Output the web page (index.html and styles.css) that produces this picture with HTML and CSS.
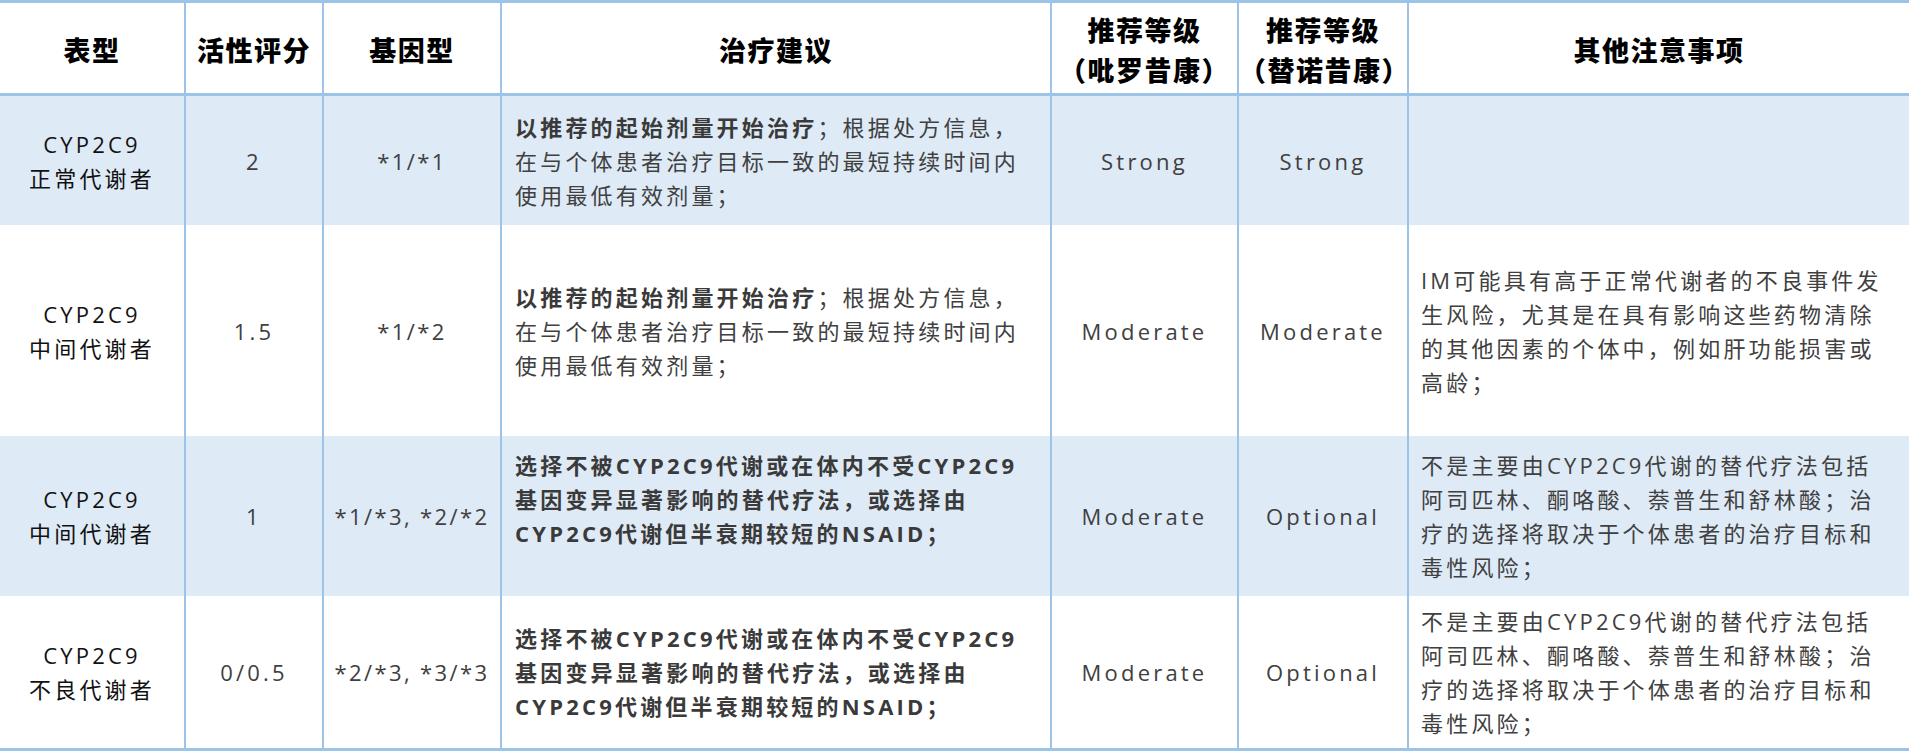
FILE: index.html
```html
<!DOCTYPE html>
<html lang="zh-CN">
<head>
<meta charset="utf-8">
<title>CYP2C9 表型与治疗建议</title>
<link rel="stylesheet" href="styles.css">
</head>
<body>
<table class="grid">
  <colgroup>
    <col class="c-phen">
    <col class="c-score">
    <col class="c-geno">
    <col class="c-treat">
    <col class="c-lvl1">
    <col class="c-lvl2">
    <col class="c-note">
  </colgroup>
  <thead>
    <tr class="head">
      <th>表型</th>
      <th>活性评分</th>
      <th>基因型</th>
      <th>治疗建议</th>
      <th>推荐等级<br>（吡罗昔康）</th>
      <th>推荐等级<br>（替诺昔康）</th>
      <th>其他注意事项</th>
    </tr>
  </thead>
  <tbody>
    <tr class="r1 shade">
      <td class="phen">CYP2C9<br>正常代谢者</td>
      <td class="mid">2</td>
      <td class="mid geno">*1/*1</td>
      <td class="txt"><b>以推荐的起始剂量开始治疗</b>；根据处方信息，<br>在与个体患者治疗目标一致的最短持续时间内<br>使用最低有效剂量；</td>
      <td class="mid">Strong</td>
      <td class="mid">Strong</td>
      <td class="txt note"></td>
    </tr>
    <tr class="r2">
      <td class="phen">CYP2C9<br>中间代谢者</td>
      <td class="mid">1.5</td>
      <td class="mid geno">*1/*2</td>
      <td class="txt"><b>以推荐的起始剂量开始治疗</b>；根据处方信息，<br>在与个体患者治疗目标一致的最短持续时间内<br>使用最低有效剂量；</td>
      <td class="mid">Moderate</td>
      <td class="mid">Moderate</td>
      <td class="txt note">IM可能具有高于正常代谢者的不良事件发<br>生风险，尤其是在具有影响这些药物清除<br>的其他因素的个体中，例如肝功能损害或<br>高龄；</td>
    </tr>
    <tr class="r3 shade">
      <td class="phen">CYP2C9<br>中间代谢者</td>
      <td class="mid">1</td>
      <td class="mid geno">*1/*3, *2/*2</td>
      <td class="txt strong raised">选择不被CYP2C9代谢或在体内不受CYP2C9<br>基因变异显著影响的替代疗法，或选择由<br>CYP2C9代谢但半衰期较短的NSAID；</td>
      <td class="mid">Moderate</td>
      <td class="mid">Optional</td>
      <td class="txt note">不是主要由CYP2C9代谢的替代疗法包括<br>阿司匹林、酮咯酸、萘普生和舒林酸；治<br>疗的选择将取决于个体患者的治疗目标和<br>毒性风险；</td>
    </tr>
    <tr class="r4">
      <td class="phen">CYP2C9<br>不良代谢者</td>
      <td class="mid">0/0.5</td>
      <td class="mid geno">*2/*3, *3/*3</td>
      <td class="txt strong">选择不被CYP2C9代谢或在体内不受CYP2C9<br>基因变异显著影响的替代疗法，或选择由<br>CYP2C9代谢但半衰期较短的NSAID；</td>
      <td class="mid">Moderate</td>
      <td class="mid">Optional</td>
      <td class="txt note">不是主要由CYP2C9代谢的替代疗法包括<br>阿司匹林、酮咯酸、萘普生和舒林酸；治<br>疗的选择将取决于个体患者的治疗目标和<br>毒性风险；</td>
    </tr>
  </tbody>
</table>
</body>
</html>
```

FILE: styles.css
```css
html, body {
  margin: 0;
  padding: 0;
  background: #ffffff;
}

.grid {
  width: 1909px;
  table-layout: fixed;
  border-collapse: separate;
  border-spacing: 0;
  border-top: 3px solid #9dc3e6;
  border-bottom: 3px solid #9dc3e6;
  font-family: "Open Sans", "Noto Sans CJK SC", sans-serif;
  color: #404040;
}

.c-phen { width: 186px; }
.c-score { width: 138px; }
.c-geno { width: 178px; }
.c-treat { width: 550px; }
.c-lvl1 { width: 187px; }
.c-lvl2 { width: 170px; }
.c-note { width: 500px; }

th, td {
  padding: 0;
  border-right: 2px solid #9dc3e6;
  vertical-align: middle;
}

th:last-child, td:last-child {
  border-right: 0;
}

.head { height: 93px; }
.r1 { height: 129px; }
.r2 { height: 211px; }
.r3 { height: 160px; }
.r4 { height: 152px; }

th {
  border-bottom: 3px solid #9dc3e6;
  padding-top: 4px;
  font-family: "Noto Sans CJK SC", sans-serif;
  font-size: 27px;
  font-weight: 900;
  line-height: 40px;
  letter-spacing: 1.5px;
  color: #000000;
  text-align: center;
}

td {
  font-size: 22px;
  line-height: 34px;
  letter-spacing: 3.2px;
}

.shade td {
  background: #deeaf6;
}

.phen {
  text-align: center;
  color: #111111;
}

.mid {
  text-align: center;
}

.geno {
  letter-spacing: 2.4px;
}

.txt {
  text-align: left;
  padding-left: 13px;
  white-space: nowrap;
}

.note {
  padding-left: 12px;
}

.txt b,
.strong {
  font-weight: 700;
  color: #3a3a3a;
}

.raised {
  padding-bottom: 34px;
}
```
